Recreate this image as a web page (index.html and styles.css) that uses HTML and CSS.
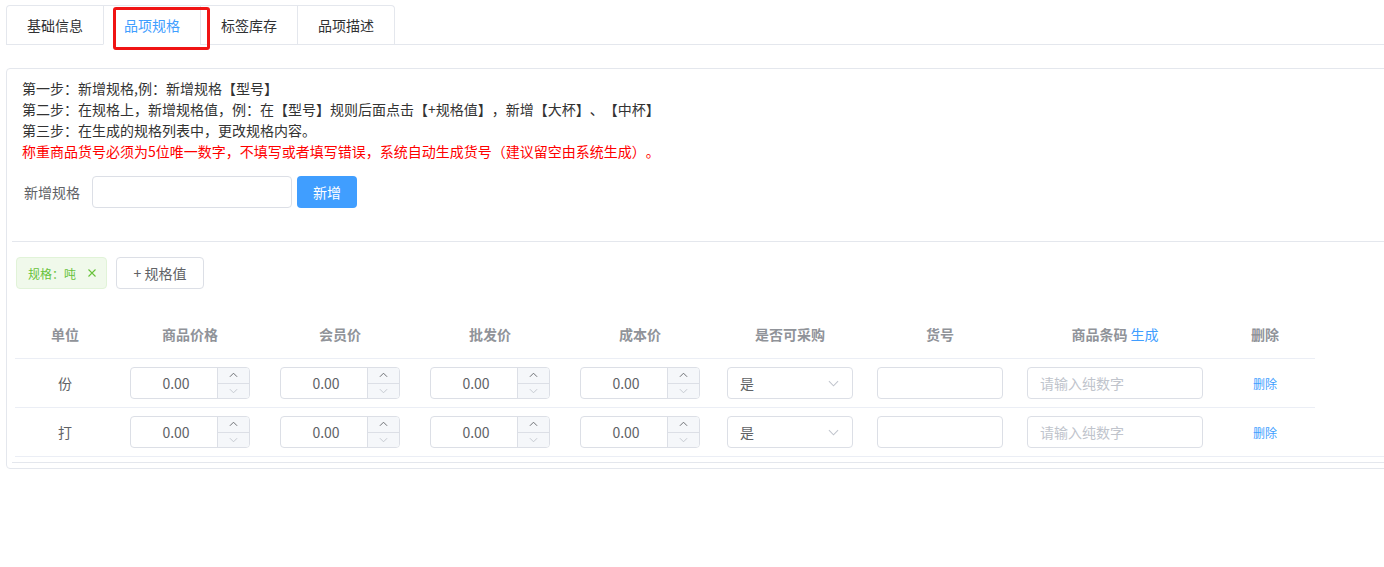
FILE: index.html
```html
<!DOCTYPE html>
<html lang="zh-CN">
<head>
  <meta charset="UTF-8" />
  <meta name="viewport" content="width=device-width, initial-scale=1" />
  <title>品项规格</title>
  <link rel="stylesheet" href="styles.css">
</head>
<body>

  <div class="tabs">
    <div class="tab-nav">
      <div class="tab">基础信息</div>
      <div class="tab active">品项规格</div>
      <div class="tab">标签库存</div>
      <div class="tab">品项描述</div>
    </div>
    <div class="mark"></div>
  </div>

  <div class="panel">
    <div class="tips">
      <p>第一步：新增规格,例：新增规格【型号】</p>
      <p>第二步：在规格上，新增规格值，例：在【型号】规则后面点击【+规格值】，新增【大杯】、【中杯】</p>
      <p>第三步：在生成的规格列表中，更改规格内容。</p>
      <p class="warn">称重商品货号必须为5位唯一数字，不填写或者填写错误，系统自动生成货号（建议留空由系统生成）。</p>
    </div>

    <div class="add-row">
      <label class="add-label">新增规格</label>
      <input class="text-input spec-name" type="text">
      <button class="btn-primary">新增</button>
    </div>

    <div class="divider"></div>

    <div class="spec-row">
      <span class="tag">规格：吨
        <svg class="tag-close" viewBox="0 0 16 16" width="16" height="16"><path d="M4.5 4.5l7 7M11.5 4.5l-7 7" stroke="#67c23a" stroke-width="1.1" fill="none"/></svg>
      </span>
      <button class="btn">+ 规格值</button>
    </div>

    <div class="sku-table">
      <table>
        <colgroup>
          <col style="width:100px"><col style="width:150px"><col style="width:150px"><col style="width:150px">
          <col style="width:150px"><col style="width:150px"><col style="width:150px"><col style="width:200px"><col style="width:100px">
        </colgroup>
        <thead>
          <tr>
            <th>单位</th>
            <th>商品价格</th>
            <th>会员价</th>
            <th>批发价</th>
            <th>成本价</th>
            <th>是否可采购</th>
            <th>货号</th>
            <th>商品条码 <a class="link">生成</a></th>
            <th>删除</th>
          </tr>
        </thead>
        <tbody id="rows"></tbody>
      </table>
    </div>

    <div class="divider bottom"></div>
  </div>

  <script>
    // 单位列表
    const units = ['份', '打'];

    const upIcon = '<svg viewBox="0 0 10 6" width="9" height="6"><path d="M1 5l4-4 4 4" stroke="#606266" stroke-width="1" fill="none"/></svg>';
    const downIcon = '<svg viewBox="0 0 10 6" width="9" height="6"><path d="M1 1l4 4 4-4" stroke="#c0c4cc" stroke-width="1" fill="none"/></svg>';
    const arrow = '<svg viewBox="0 0 12 7" width="11" height="7"><path d="M1 1l5 5 5-5" stroke="#c0c4cc" stroke-width="1.1" fill="none"/></svg>';

    function numBox() {
      return `<div class="num">
        <span class="num-val">0.00</span>
        <span class="num-ctrl"><span class="num-up">${upIcon}</span><span class="num-down">${downIcon}</span></span>
      </div>`;
    }

    let html = '';
    units.forEach(u => {
      html += `<tr>
        <td>${u}</td>
        <td>${numBox()}</td>
        <td>${numBox()}</td>
        <td>${numBox()}</td>
        <td>${numBox()}</td>
        <td><div class="select"><span>是</span>${arrow}</div></td>
        <td><input class="text-input sku-no" type="text"></td>
        <td><input class="text-input barcode" type="text" placeholder="请输入纯数字"></td>
        <td><a class="link small">删除</a></td>
      </tr>`;
    });
    document.getElementById('rows').innerHTML = html;
  </script>
</body>
</html>
```

FILE: styles.css
```css
html, body {
  overflow: hidden;
}
body {
  margin: 0;
  padding: 5px 0 0 6px;
  font-family: "Noto Sans CJK SC", "Microsoft YaHei", sans-serif;
  font-size: 14px;
  color: #303133;
  background: #fff;
  text-spacing-trim: space-all;
}

/* tabs */
.tabs {
  position: relative;
  border-bottom: 1px solid #e4e7ed;
  display: flex;
}
.tab-nav {
  display: flex;
  border: 1px solid #e4e7ed;
  border-bottom: none;
  border-radius: 4px 4px 0 0;
  margin-bottom: -1px;
}
.tab {
  height: 38px;
  line-height: 38px;
  padding: 0 20px;
  border-left: 1px solid #e4e7ed;
  border-bottom: 1px solid transparent;
  color: #303133;
}
.tab:first-child {
  border-left: none;
}
.tab.active {
  color: #409eff;
  border-bottom-color: #fff;
}
.mark {
  position: absolute;
  left: 107px;
  top: 2px;
  width: 97px;
  height: 43px;
  box-sizing: border-box;
  border: 3px solid #f01414;
  border-radius: 3px;
}

/* panel */
.panel {
  margin-top: 23px;
  margin-right: -30px;
  border: 1px solid #e4e7ed;
  border-radius: 4px;
}
.tips {
  padding: 9px 15px 0;
  line-height: 21px;
  color: #333;
}
.tips p {
  margin: 0;
}
.tips .warn {
  color: #ff0000;
}

.add-row {
  display: flex;
  align-items: center;
  margin: 14px 0 0 17px;
}
.add-label {
  color: #606266;
  margin-right: 12px;
}
.text-input {
  height: 32px;
  box-sizing: border-box;
  border: 1px solid #dcdfe6;
  border-radius: 4px;
  padding: 0 12px;
  font-family: inherit;
  font-size: 14px;
  color: #606266;
  outline: none;
}
.text-input::placeholder {
  color: #c0c4cc;
}
.spec-name {
  width: 200px;
}
.btn-primary {
  margin-left: 5px;
  width: 60px;
  height: 32px;
  border: none;
  border-radius: 4px;
  background: #409eff;
  color: #fff;
  font-family: inherit;
  font-size: 14px;
}

.divider {
  margin: 33px 0 0 5px;
  border-top: 1px solid #e4e7ed;
}
.divider.bottom {
  margin: 5px 0 5px 5px;
}

.spec-row {
  display: flex;
  align-items: center;
  margin: 15px 0 0 9px;
}
.tag {
  display: inline-flex;
  align-items: center;
  height: 32px;
  box-sizing: border-box;
  padding: 0 10px 0 11px;
  background: #f0f9eb;
  border: 1px solid #e1f3d8;
  border-radius: 4px;
  color: #67c23a;
  font-size: 12px;
}
.tag-close {
  margin: 0 -4px 0 8px;
}
.btn {
  margin-left: 9px;
  width: 88px;
  height: 32px;
  background: #fff;
  border: 1px solid #dcdfe6;
  border-radius: 4px;
  color: #606266;
  font-family: inherit;
  font-size: 14px;
}

/* table */
.sku-table {
  margin: 21px 0 0 8px;
  border-bottom: 1px solid #ebeef5;
}
table {
  width: 1300px;
  border-collapse: collapse;
  table-layout: fixed;
}
th, td {
  height: 48px;
  padding: 0;
  text-align: center;
  border-bottom: 1px solid #ebeef5;
}
tbody tr:last-child td {
  border-bottom: none;
}
th {
  color: #909399;
  font-weight: bold;
}
td {
  color: #606266;
}
.link {
  color: #409eff;
  font-weight: normal;
  cursor: pointer;
}
.link.small {
  font-size: 12px;
}

.num {
  display: inline-flex;
  width: 120px;
  height: 32px;
  box-sizing: border-box;
  border: 1px solid #dcdfe6;
  border-radius: 4px;
  vertical-align: middle;
  overflow: hidden;
}
.num-val {
  flex: 1;
  padding-left: 4px;
  line-height: 30px;
  text-align: center;
  color: #606266;
}
.num-ctrl {
  width: 31px;
  display: flex;
  flex-direction: column;
  border-left: 1px solid #dcdfe6;
  background: #f5f7fa;
}
.num-up, .num-down {
  flex: 1;
  display: flex;
  align-items: center;
  justify-content: center;
}
.num-up {
  border-bottom: 1px solid #dcdfe6;
}

.select {
  display: inline-flex;
  align-items: center;
  justify-content: space-between;
  width: 126px;
  height: 32px;
  box-sizing: border-box;
  padding: 0 13px 0 12px;
  border: 1px solid #dcdfe6;
  border-radius: 4px;
  color: #606266;
  vertical-align: middle;
}
.sku-no {
  width: 126px;
}
.barcode {
  width: 176px;
}
```
